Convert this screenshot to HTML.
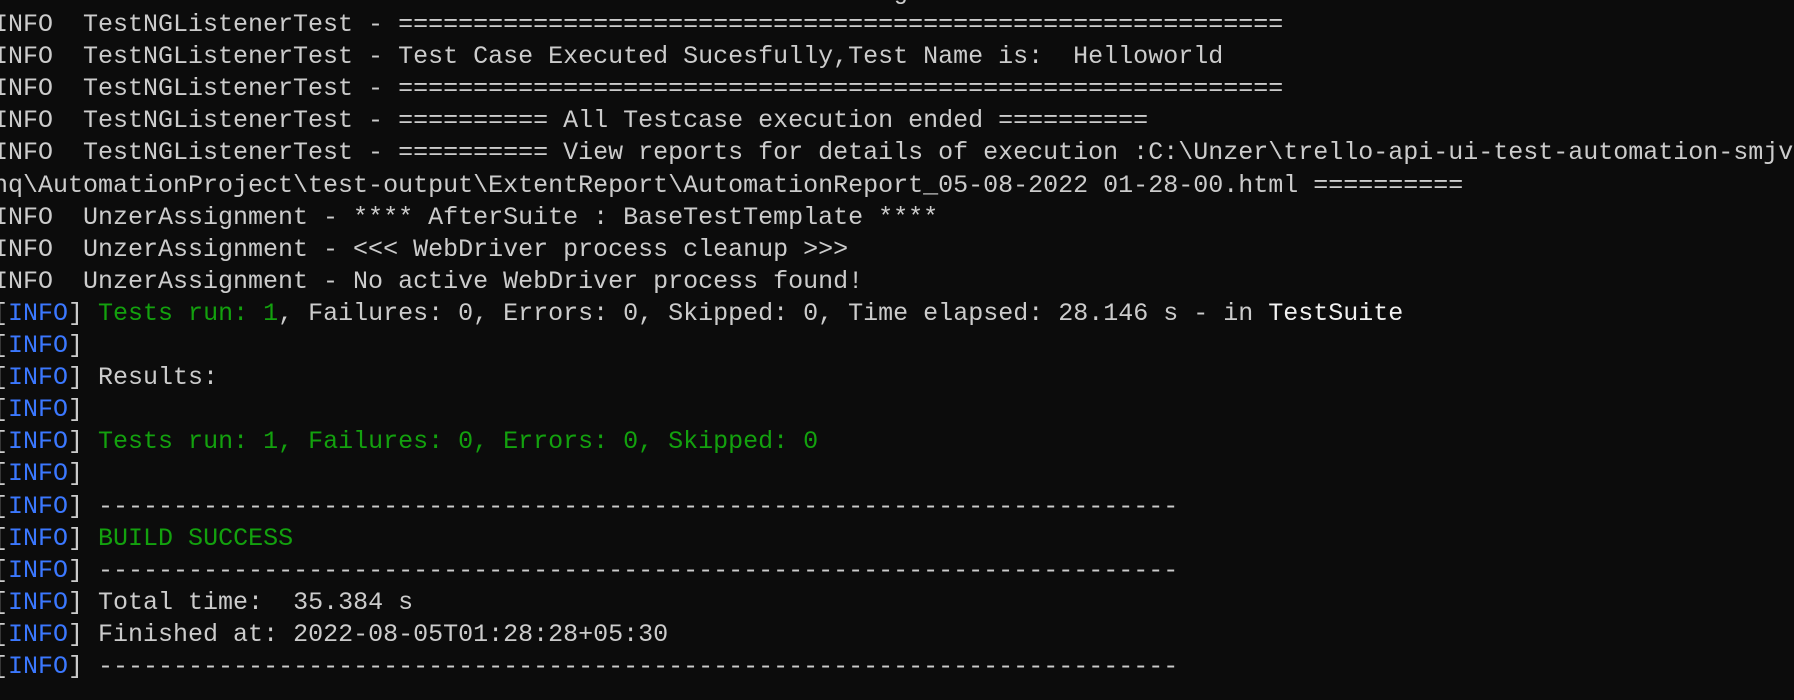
<!DOCTYPE html>
<html><head><style>
html,body{margin:0;padding:0;background:#0c0c0c;width:1794px;height:700px;overflow:hidden}
pre{position:absolute;left:-7px;top:-23px;margin:0;font-family:"Liberation Mono",monospace;font-size:25px;letter-spacing:0px;line-height:32.1px;color:#cccccc;white-space:pre}
.b{color:#3b78ff}.g{color:#13a10e}.w{color:#f2f2f2}
</style></head><body>
<pre>                                                            g
INFO  TestNGListenerTest - ===========================================================
INFO  TestNGListenerTest - Test Case Executed Sucesfully,Test Name is:  Helloworld
INFO  TestNGListenerTest - ===========================================================
INFO  TestNGListenerTest - ========== All Testcase execution ended ==========
INFO  TestNGListenerTest - ========== View reports for details of execution :C:\Unzer\trello-api-ui-test-automation-smjv
nq\AutomationProject\test-output\ExtentReport\AutomationReport_05-08-2022 01-28-00.html ==========
INFO  UnzerAssignment - **** AfterSuite : BaseTestTemplate ****
INFO  UnzerAssignment - &lt;&lt;&lt; WebDriver process cleanup &gt;&gt;&gt;
INFO  UnzerAssignment - No active WebDriver process found!
[<span class="b">INFO</span>] <span class="g">Tests run: 1</span>, Failures: 0, Errors: 0, Skipped: 0, Time elapsed: 28.146 s - in <span class="w">TestSuite</span>
[<span class="b">INFO</span>]
[<span class="b">INFO</span>] Results:
[<span class="b">INFO</span>]
[<span class="b">INFO</span>] <span class="g">Tests run: 1, Failures: 0, Errors: 0, Skipped: 0</span>
[<span class="b">INFO</span>]
[<span class="b">INFO</span>] ------------------------------------------------------------------------
[<span class="b">INFO</span>] <span class="g">BUILD SUCCESS</span>
[<span class="b">INFO</span>] ------------------------------------------------------------------------
[<span class="b">INFO</span>] Total time:  35.384 s
[<span class="b">INFO</span>] Finished at: 2022-08-05T01:28:28+05:30
[<span class="b">INFO</span>] ------------------------------------------------------------------------
</pre>
</body></html>
